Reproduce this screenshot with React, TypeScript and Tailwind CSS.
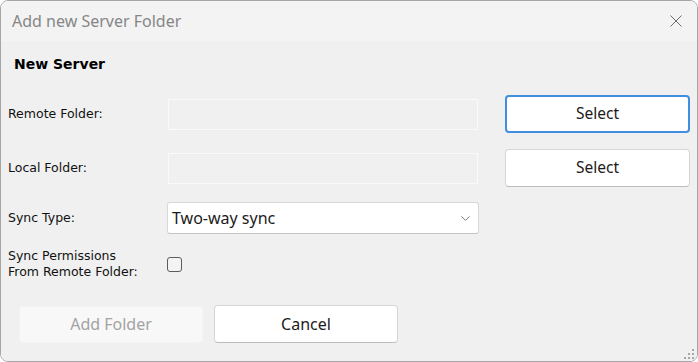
import { ChevronDown } from "lucide-react";

const LABEL = "w-[159px] shrink-0 text-[12.5px] leading-[16px] text-[#111] font-['DejaVu_Sans',sans-serif]";
const UI = "font-['Noto_Sans','Liberation_Sans',sans-serif]";

function CloseIcon() {
  return (
    <svg width="12" height="12" viewBox="0 0 12 12" className="text-[#6b6b6b]">
      <path d="M0.5 0.5 L11.5 11.5 M11.5 0.5 L0.5 11.5" stroke="currentColor" strokeWidth="1" fill="none" />
    </svg>
  );
}

function ResizeGrip() {
  const dots = [
    [8, 0],
    [8, 4], [4, 4],
    [8, 8], [4, 8], [0, 8],
  ];
  return (
    <svg width="10" height="10" viewBox="0 0 10 10" className="absolute right-[3px] bottom-[2px]">
      {dots.map(([x, y], i) => (
        <rect key={i} x={x} y={y} width="2" height="2" fill="#a8a8a8" />
      ))}
    </svg>
  );
}

function SelectButton({ focused }: { focused?: boolean }) {
  return (
    <button
      type="button"
      className={
        focused
          ? `ml-[27px] h-[38px] w-[185px] rounded-[4px] border-2 border-[#3f8ee0] bg-white text-[15.5px] text-[#1b1b1b] ${UI}`
          : `ml-[27px] h-[38px] w-[185px] rounded-[4px] border border-[#d6d6d6] border-b-[#bcbcbc] bg-white text-[15.5px] text-[#1b1b1b] ${UI}`
      }
    >
      Select
    </button>
  );
}

export default function App() {
  return (
    <div className="w-[698px] h-[362px] bg-white">
      <div className="w-[698px] h-[362px] rounded-[8px] border border-[#a6a6a6] overflow-hidden flex flex-col">
        <div className="h-[40px] shrink-0 bg-[#f3f3f3] flex items-center justify-between pl-[11px] pr-[15px]">
          <span className={`text-[16px] text-[#868686] ${UI}`}>Add new Server Folder</span>
          <CloseIcon />
        </div>

        <div className="relative flex-1 bg-[#f0f0f0] flex flex-col">
          <div className="pl-[13px] pt-[13px] h-[54px] text-[14px] leading-[20px] font-bold text-black font-['DejaVu_Sans',sans-serif]">
            New Server
          </div>

          <div className="pl-[7px] flex flex-col">
            <div className="flex items-center h-[38px]">
              <div className={LABEL}>Remote Folder:</div>
              <div className="ml-px h-[31px] w-[310px] border-[1.5px] border-[#fafafa]" />
              <SelectButton focused />
            </div>

            <div className="flex items-center h-[38px] mt-[16px]">
              <div className={LABEL}>Local Folder:</div>
              <div className="ml-px h-[31px] w-[310px] border-[1.5px] border-[#fafafa]" />
              <SelectButton />
            </div>

            <div className="flex items-center h-[38px] mt-[12px]">
              <div className={LABEL}>Sync Type:</div>
              <div className="h-[32px] w-[312px] rounded-[3px] border border-[#d8d8d8] border-b-[#c4c4c4] bg-white flex items-center justify-between pl-[4px] pr-[5px]">
                <span className={`text-[16px] text-[#1b1b1b] ${UI}`}>Two-way sync</span>
                <ChevronDown size={15} strokeWidth={1.25} className="text-[#5a5a5a]" />
              </div>
            </div>

            <div className="flex items-center h-[32px] mt-[11px]">
              <div className={LABEL}>
                Sync Permissions
                <br />
                From Remote Folder:
              </div>
              <div className="h-[15px] w-[15px] rounded-[3px] border border-[#5c5c5c] bg-[#f3f3f3]" />
            </div>
          </div>

          <div className="pl-[18px] mt-[25px] flex items-center gap-[11px]">
            <button
              type="button"
              disabled
              className={`h-[37px] w-[184px] rounded-[4px] bg-[#f8f8f8] border border-[#f4f4f4] text-[16px] text-[#a3a3a3] ${UI}`}
            >
              Add Folder
            </button>
            <button
              type="button"
              className={`h-[38px] w-[184px] rounded-[4px] border border-[#d6d6d6] border-b-[#bcbcbc] bg-white text-[16px] text-[#1b1b1b] ${UI}`}
            >
              Cancel
            </button>
          </div>

          <ResizeGrip />
        </div>
      </div>
    </div>
  );
}
